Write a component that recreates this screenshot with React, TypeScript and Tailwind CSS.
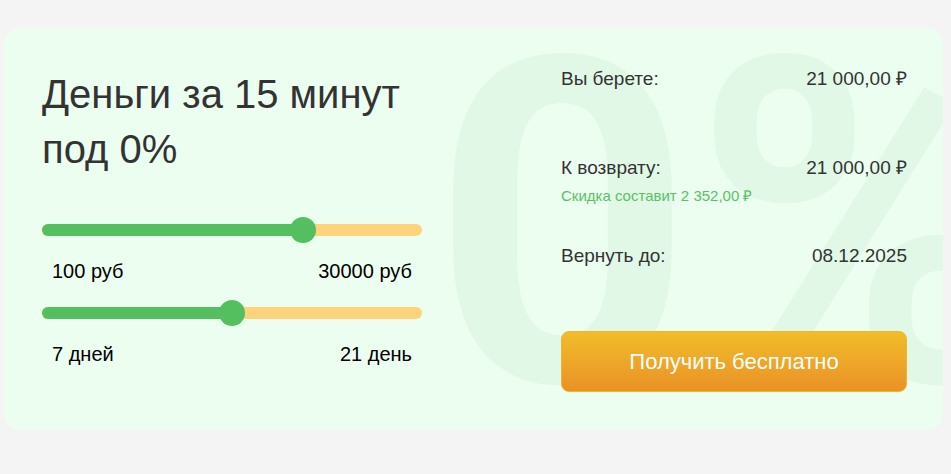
import React, { useState } from "react";

const FONT = { fontFamily: '"Liberation Sans", Arial, sans-serif' };

type SliderProps = {
  min: number;
  max: number;
  value: number;
  left: string;
  right: string;
};

function Slider({ min, max, value, left, right }: SliderProps) {
  const frac = (value - min) / (max - min);
  // thumb is 25px wide, its center moves across width - 25
  const center = `calc(12.5px + ${frac} * (100% - 25px))`;
  return (
    <div>
      <div className="relative h-[26px] flex items-center">
        <div className="w-full h-[12px] rounded-full bg-[#ffd27c] overflow-hidden">
          <div className="h-full bg-[#53bf5f]" style={{ width: center }} />
        </div>
        <div
          className="absolute top-0 w-[26px] h-[26px] -ml-[13px] rounded-full bg-[#53bf5f]"
          style={{ left: center }}
        />
      </div>
      <div className="flex justify-between px-[10px] mt-[16px] text-[20px] leading-[24px] text-black">
        <span>{left}</span>
        <span>{right}</span>
      </div>
    </div>
  );
}

function Row({ label, value }: { label: string; value: string }) {
  return (
    <div className="flex justify-between text-[19px] leading-[22px] text-[#333]">
      <span>{label}</span>
      <span>{value}</span>
    </div>
  );
}

export default function App() {
  const [amount] = useState(21000);
  const [days] = useState(14);

  return (
    <div className="min-h-[474px] bg-[#f4f4f4] pt-[28px] pl-[4px]" style={FONT}>
      <div className="relative w-[939px] h-[402px] rounded-2xl bg-[#ecfef0] overflow-hidden flex justify-between pl-[38px] pr-[36px] pt-[39px]">
        {/* big watermark */}
        <div
          aria-hidden
          className="absolute left-[428px] top-[-30px] text-[455px] leading-none font-bold text-[#e2f8e7] select-none whitespace-nowrap font-['Roboto',sans-serif]"
        >
          0%
        </div>

        <div className="relative w-[380px]">
          <h1 className="text-[40px] leading-[55px] text-[#333] font-normal">
            Деньги за 15 минут
            <br />
            под 0%
          </h1>
          <div className="mt-[40px]">
            <Slider min={100} max={30000} value={amount} left="100 руб" right="30000 руб" />
          </div>
          <div className="mt-[17px]">
            <Slider min={7} max={21} value={days} left="7 дней" right="21 день" />
          </div>
        </div>

        <div className="relative w-[346px] pt-[1px]">
          <Row label="Вы берете:" value="21 000,00 ₽" />
          <div className="mt-[67px]">
            <Row label="К возврату:" value="21 000,00 ₽" />
            <div className="mt-[8px] text-[15px] leading-[18px] text-[#58c262]">
              Скидка составит 2 352,00 ₽
            </div>
          </div>
          <div className="mt-[40px]">
            <Row label="Вернуть до:" value="08.12.2025" />
          </div>
          <button className="mt-[64px] w-full h-[61px] rounded-lg border border-[#f0b62a] bg-gradient-to-b from-[#f1bd2a] to-[#e99126] text-white text-[22px]">
            Получить бесплатно
          </button>
        </div>
      </div>
    </div>
  );
}
